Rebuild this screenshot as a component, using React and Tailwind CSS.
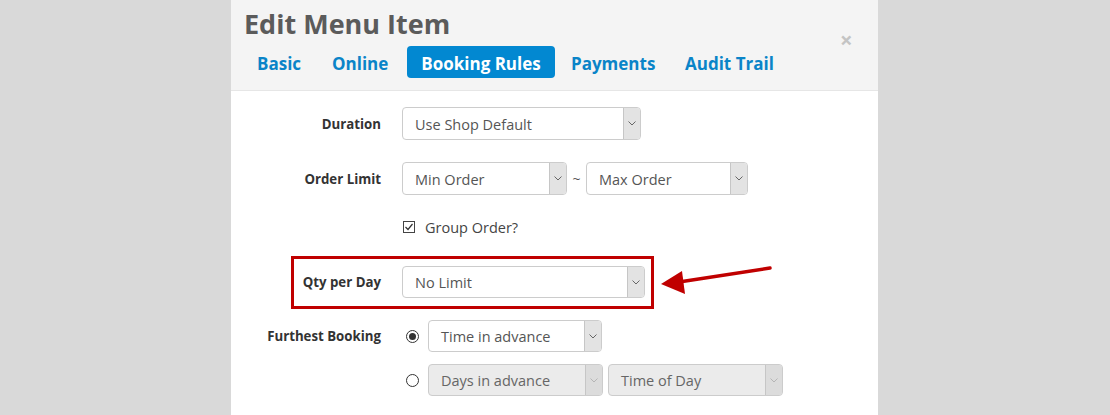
import React from "react"

const Chevron = ({ muted }) => (
  <svg width="8" height="5" viewBox="0 0 8 5" className="block">
    <path d="M0.5 0.5 L4 4 L7.5 0.5" fill="none" stroke={muted ? "#b5b5b5" : "#666"} strokeWidth="1" />
  </svg>
)

const Select = ({ value, width, disabled }) => (
  <div
    className={`flex h-full rounded-[4px] border border-[#cccccc] overflow-hidden ${disabled ? "bg-[#ebebeb]" : "bg-white"}`}
    style={{ width }}
  >
    <div className={`flex-1 flex items-center pl-[12px] pt-[2px] text-[14.5px] ${disabled ? "text-[#666]" : "text-[#555]"}`}>{value}</div>
    <div className={`w-[17px] flex items-center justify-center border-l border-[#c6c6c6] ${disabled ? "bg-[#dcdcdc]" : "bg-[#e3e3e3]"}`}>
      <Chevron muted={disabled} />
    </div>
  </div>
)

const Label = ({ children }) => (
  <div className="w-[171px] shrink-0 pr-[21px] pt-[2px] text-right text-[13.25px] font-bold text-[#333]">{children}</div>
)

const tabs = [
  { name: "Basic", cls: "w-[75px] pl-[13px]" },
  { name: "Online", cls: "w-[88px] pl-[13px]" },
  { name: "Booking Rules", cls: "w-[148px] justify-center bg-[#0288d1] text-white rounded-[4px]", active: true },
  { name: "Payments", cls: "w-[117px] pl-[16px]" },
  { name: "Audit Trail", cls: "pl-[13px]" },
]

export default function App() {
  return (
    <div className="w-[1110px] h-[415px] bg-[#d9d9d9] overflow-hidden" style={{ fontFamily: '"Open Sans", "Noto Sans", sans-serif' }}>
      <div className="relative ml-[231px] w-[647px] h-full bg-white">
        {/* header */}
        <div className="relative h-[91px] bg-[#f4f4f4] border-b border-[#e6e6e6]">
          <h1 className="pl-[13px] pt-[6px] text-[27px] leading-[36px] font-bold text-[#5b5b5b]">Edit Menu Item</h1>
          <div className="flex mt-[4px] ml-[13px] h-[32px]">
            {tabs.map((t) => (
              <div
                key={t.name}
                className={`flex items-center h-full pt-[3px] text-[17px] font-bold ${t.active ? "" : "text-[#0a84c8]"} ${t.cls}`}
              >
                {t.name}
              </div>
            ))}
          </div>
          <div className="absolute left-[609px] top-[28px] text-[22px] font-bold leading-none text-[#c4c4c4]">×</div>
        </div>

        {/* body */}
        <div className="pt-[16px]">
          <div className="flex items-center h-[33px]">
            <Label>Duration</Label>
            <Select value="Use Shop Default" width={239} />
          </div>

          <div className="flex items-center h-[33px] mt-[22px]">
            <Label>Order Limit</Label>
            <Select value="Min Order" width={165} />
            <div className="w-[19px] text-center text-[14px] text-[#555]">~</div>
            <Select value="Max Order" width={162} />
          </div>

          <div className="flex items-center h-[31px] mt-[16px]">
            <div className="w-[172px] shrink-0" />
            <div className="w-[12px] h-[12px] border border-[#444] flex items-center justify-center">
              <svg width="10" height="10" viewBox="0 0 10 10">
                <path d="M1.5 5 L4 7.5 L8.5 2" fill="none" stroke="#333" strokeWidth="1.2" />
              </svg>
            </div>
            <div className="ml-[10px] pt-[2px] text-[14.5px] text-[#444]">Group Order?</div>
          </div>

          <div className="flex items-center h-[32px] mt-[24px]">
            <Label>Qty per Day</Label>
            <Select value="No Limit" width={243} />
          </div>

          <div className="flex items-center h-[32px] mt-[22px]">
            <Label>Furthest Booking</Label>
            <div className="w-[26px] flex items-center pl-[4px]">
              <div className="w-[13px] h-[13px] rounded-full border border-[#333] flex items-center justify-center">
                <div className="w-[7px] h-[7px] rounded-full bg-[#333]" />
              </div>
            </div>
            <Select value="Time in advance" width={174} />
          </div>

          <div className="flex items-center h-[32px] mt-[12px]">
            <div className="w-[171px] shrink-0" />
            <div className="w-[26px] flex items-center pl-[4px]">
              <div className="w-[13px] h-[13px] rounded-full border border-[#333]" />
            </div>
            <Select value="Days in advance" width={175} disabled />
            <div className="w-[5px]" />
            <Select value="Time of Day" width={175} disabled />
          </div>
        </div>

        {/* annotation: highlight box and arrow */}
        <div className="absolute left-[60px] top-[256px] w-[363px] h-[53px] border-[3px] border-[#c00000]" />
        <svg className="absolute left-[400px] top-[255px]" width="150" height="50" viewBox="0 0 150 50">
          <path d="M48 27 L139 13" stroke="#c00000" strokeWidth="3.5" strokeLinecap="round" />
          <polygon points="30,29 51,16 54,39" fill="#c00000" />
        </svg>
      </div>
    </div>
  )
}
